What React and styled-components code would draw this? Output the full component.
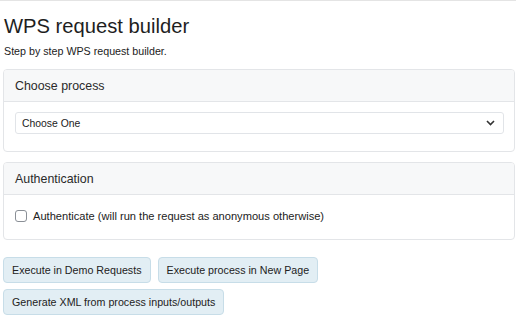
import React from "react";
import styled, { createGlobalStyle } from "styled-components";

const Global = createGlobalStyle`
  html, body { margin: 0; padding: 0; background: #fff; }
  body {
    font-family: "Liberation Sans", Arial, sans-serif;
    color: #212529;
    border-top: 1px solid #e4e4e4;
  }
`;

const Page = styled.div`
  padding: 11px 1px 0 3px;
  display: flex;
  flex-direction: column;
`;

const Title = styled.h1`
  margin: 0 0 0 1px;
  font-size: 20.2px;
  font-weight: 400;
  line-height: 28px;
  color: #1e1e1e;
`;

const Lead = styled.p`
  margin: 4px 0 0 1px;
  font-size: 10.7px;
  line-height: 14px;
  color: #222;
`;

const Card = styled.section`
  margin-top: ${(p) => p.$mt}px;
  border: 1px solid #e3e5e8;
  border-radius: 4px;
  background: #fff;
  overflow: hidden;
`;

const CardHeader = styled.div`
  background: #f7f8f9;
  border-bottom: 1px solid #e3e5e8;
  height: 31px;
  display: flex;
  align-items: center;
  padding: 0 11px;
  font-size: 12.4px;
  color: #2a2a2a;
`;

const CardBody = styled.div`
  padding: ${(p) => p.$pad};
`;

const SelectBox = styled.div`
  height: 20px;
  border: 1px solid #e1e4e8;
  border-radius: 3px;
  display: flex;
  align-items: center;
  justify-content: space-between;
  padding: 0 8px 0 6px;
  font-size: 10.4px;
  color: #222;
`;

const CheckRow = styled.label`
  display: flex;
  align-items: center;
  gap: 6px;
  height: 14px;
  font-size: 11.1px;
  color: #222;
`;

const Box = styled.span`
  width: 10px;
  height: 10px;
  border: 1px solid #8a8f96;
  border-radius: 3px;
  background: #fff;
`;

const Buttons = styled.div`
  margin-top: 17px;
  display: flex;
  flex-wrap: wrap;
  gap: 6px 7px;
  max-width: 325px;
`;

const Button = styled.button`
  height: 26px;
  padding: 0 8px;
  border: 1px solid #c7dde8;
  border-radius: 4px;
  background: #e2eef4;
  color: #222;
  font-family: inherit;
  font-size: 10.7px;
  cursor: pointer;
`;

export default function App() {
  return (
    <>
      <Global />
      <Page>
        <Title>WPS request builder</Title>
        <Lead>Step by step WPS request builder.</Lead>
        <Card $mt={11}>
          <CardHeader>Choose process</CardHeader>
          <CardBody $pad="10px 10px 17px 11px">
            <SelectBox>
              <span>Choose One</span>
              <svg width="9" height="6" viewBox="0 0 9 6">
                <path d="M1 1l3.5 3.5L8 1" fill="none" stroke="#333" strokeWidth="1.6" />
              </svg>
            </SelectBox>
          </CardBody>
        </Card>
        <Card $mt={10}>
          <CardHeader>Authentication</CardHeader>
          <CardBody $pad="14px 11px 16px 11px">
            <CheckRow>
              <Box />
              Authenticate (will run the request as anonymous otherwise)
            </CheckRow>
          </CardBody>
        </Card>
        <Buttons>
          <Button>Execute in Demo Requests</Button>
          <Button>Execute process in New Page</Button>
          <Button>Generate XML from process inputs/outputs</Button>
        </Buttons>
      </Page>
    </>
  );
}
